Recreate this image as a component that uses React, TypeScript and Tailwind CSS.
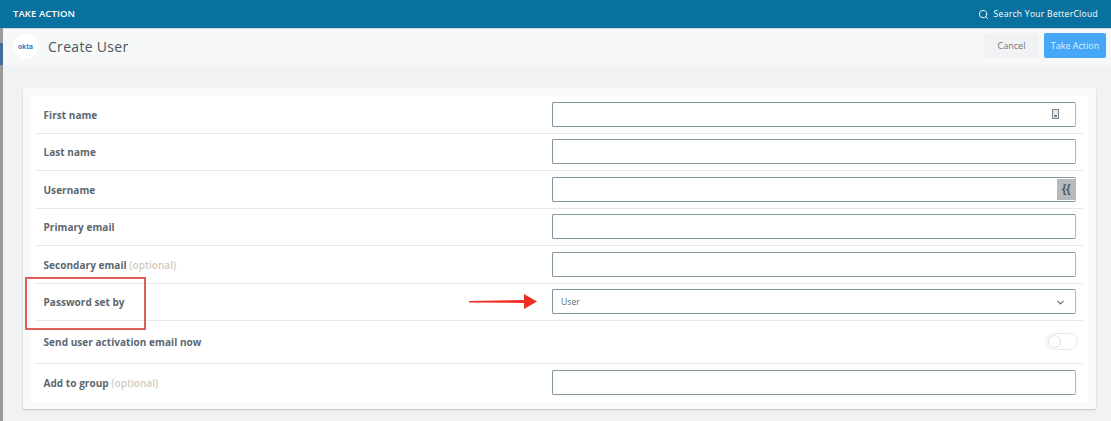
import { ChevronDown, Search } from "lucide-react";

const font = { fontFamily: '"Open Sans", sans-serif' };

function TextInput({ children }: { children?: React.ReactNode }) {
  return (
    <div className="relative h-[25px] w-[524px] rounded-[2px] border border-[#8496a0] border-r-[#aeb8bf] bg-white">
      {children}
    </div>
  );
}

function Row({
  label,
  optional,
  height,
  last,
  children,
}: {
  label: string;
  optional?: boolean;
  height: string;
  last?: boolean;
  children?: React.ReactNode;
}) {
  return (
    <div className={`mx-[5px] flex items-center justify-between pl-[7.5px] pr-[7px] ${height} ${last ? "" : "border-b border-[#e6e8ea]"}`}>
      <div className="pt-[2px] text-[10px] font-bold tracking-[0.05px] text-[#5b6770]">
        {label}
        {optional ? <span className="font-semibold text-[#cfcabd]"> (optional)</span> : null}
      </div>
      {children}
    </div>
  );
}

export default function App() {
  return (
    <div className="relative h-[421px] w-[1111px] overflow-hidden bg-[#f1f2f4]" style={font}>
      <header className="flex h-[28px] items-center justify-between bg-[#08719f] pl-[13px] pr-[13px] text-white">
        <div className="text-[9.5px] font-semibold tracking-[0.1px]">TAKE ACTION</div>
        <div className="flex items-center gap-[5px] text-[8.5px] tracking-[0.3px]">
          <Search size={11} strokeWidth={2} />
          <span>Search Your BetterCloud</span>
        </div>
      </header>

      <div className="flex h-[393px]">
        <div className="flex w-[3px] flex-col bg-[#9a9a9a]">
          <div className="mt-[15px] h-[22px] bg-[#3f6f9f]" />
        </div>
        <div className="flex-1">
          <div className="flex h-[37px] items-center justify-between border-t border-[#d8d8d8] bg-[#f7f8f8] pl-[10px] pr-[5px]">
            <div className="mb-[1px] flex items-center gap-[10px]">
              <div className="flex h-[25px] w-[25px] items-center justify-center rounded-full bg-white text-[6.5px] font-bold text-[#1d7fc4]">
                okta
              </div>
              <h1 className="text-[14px] tracking-[0.3px] text-[#4d565c]">Create User</h1>
            </div>
            <div className="mb-[3px] flex items-center gap-[5px]">
              <button className="h-[25px] w-[55px] rounded-[2px] bg-[#f1f2f4] text-[9px] text-[#6d767c]">Cancel</button>
              <button className="h-[25px] w-[62px] rounded-[2px] bg-[#45a7f5] text-[9px] text-[#dcefff]">Take Action</button>
            </div>
          </div>

          <div className="ml-[20px] mt-[23px] w-[1073px] rounded-[2px] bg-[#f8f9f9] p-[8px] pb-[7px] shadow-[0_1px_2px_rgba(0,0,0,0.2)]">
            <div className="bg-white">
              <Row label="First name" height="h-[37.5px]">
                <TextInput>
                  <div className="absolute right-[16px] top-[6px] flex h-[10px] w-[7px] items-end justify-center border border-[#7a868e] bg-[#e3e5e7]">
                    <div className="mb-[1px] h-[2px] w-[3px] bg-[#7a868e]" />
                  </div>
                </TextInput>
              </Row>
              <Row label="Last name" height="h-[37.5px]">
                <TextInput />
              </Row>
              <Row label="Username" height="h-[37.5px]">
                <TextInput>
                  <div className="absolute right-0 top-[1px] flex h-[21px] w-[18px] items-center justify-center bg-[#b5babf] text-[12px] font-bold tracking-[-0.5px] text-[#4f5e67]">
                    {"{{"}
                  </div>
                </TextInput>
              </Row>
              <Row label="Primary email" height="h-[37.5px]">
                <TextInput />
              </Row>
              <Row label="Secondary email" optional height="h-[37.5px]">
                <TextInput />
              </Row>
              <Row label="Password set by" height="h-[37.5px]">
                <TextInput>
                  <div className="flex h-full items-center justify-between pl-[8px] pr-[9px] pt-[1px] text-[8.5px] tracking-[0.1px] text-[#5f6a72]">
                    <span>User</span>
                    <ChevronDown size={11} strokeWidth={2.5} className="text-[#5b6b75]" />
                  </div>
                </TextInput>
              </Row>
              <Row label="Send user activation email now" height="h-[42.5px]">
                <div className="-mr-[2px] flex h-[17px] w-[32px] items-center rounded-full border border-[#e8e9ea] bg-white">
                  <div className="ml-[1px] h-[13px] w-[13px] rounded-full border border-[#dcdddf] bg-white" />
                </div>
              </Row>
              <Row label="Add to group" optional height="h-[38px]" last>
                <TextInput />
              </Row>
            </div>
          </div>
        </div>
      </div>

      {/* annotations drawn over the screenshot */}
      <div className="absolute left-[25px] top-[277px] h-[53px] w-[121px] border-2 border-[#dd6058]" />
      <svg className="absolute left-[468px] top-[292px]" width="70" height="20" viewBox="0 0 70 20">
        <path d="M1 9 L56 8 L56 11 L1 10.5 Z" fill="#ee2f22" />
        <path d="M56 2 L69 9.5 L56 17 Z" fill="#ee2f22" />
      </svg>
    </div>
  );
}
